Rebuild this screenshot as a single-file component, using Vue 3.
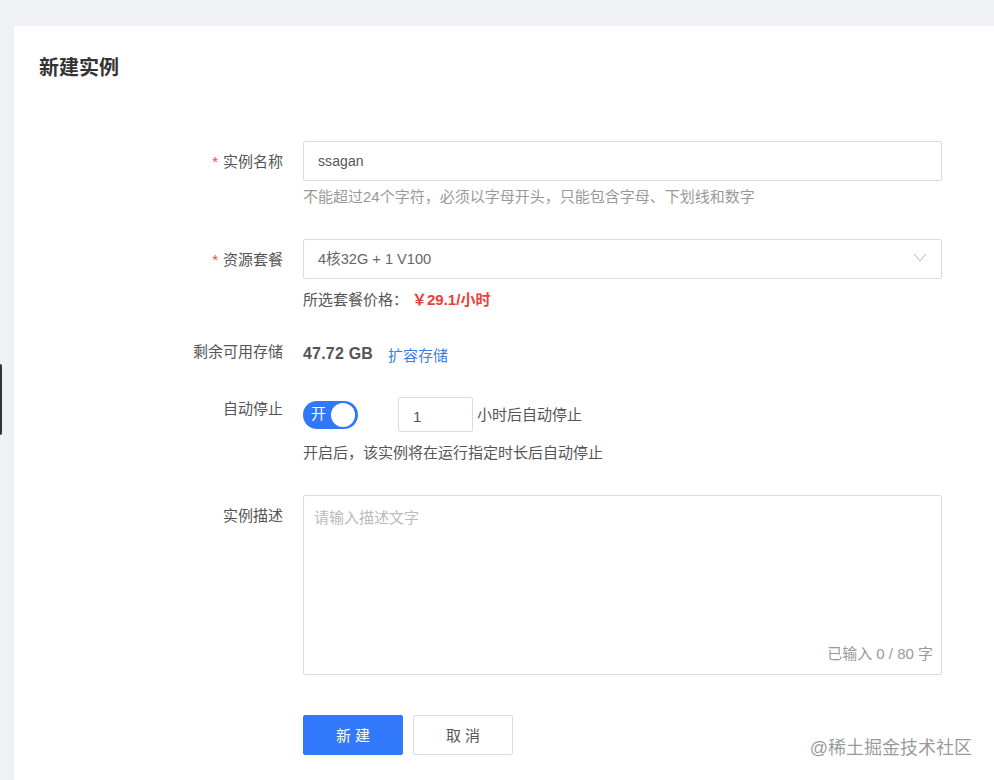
<script setup>
import { ref } from 'vue'

const name = ref('ssagan')
const hours = ref(1)
const desc = ref('')
const maxDesc = 80
</script>

<template>
  <div class="page">
    <div class="side-tab"></div>
    <div class="card">
      <h2 class="title">新建实例</h2>

      <div class="form">
        <div class="row row-name">
          <label class="label"><i>*</i>实例名称</label>
          <div class="control">
            <input v-model="name" class="input" type="text" />
            <p class="hint">不能超过24个字符，必须以字母开头，只能包含字母、下划线和数字</p>
          </div>
        </div>

        <div class="row row-plan">
          <label class="label"><i>*</i>资源套餐</label>
          <div class="control">
            <div class="select">
              <span>4核32G + 1 V100</span>
              <svg class="arrow" width="14" height="9" viewBox="0 0 14 9">
                <path d="M1 1l6 7 6-7" fill="none" stroke="#c4c4c4" stroke-width="1.1" />
              </svg>
            </div>
            <p class="price">所选套餐价格：<b>￥29.1/小时</b></p>
          </div>
        </div>

        <div class="row row-storage">
          <label class="label">剩余可用存储</label>
          <div class="control storage">
            <span class="size">47.72 GB</span>
            <a class="link">扩容存储</a>
          </div>
        </div>

        <div class="row row-stop">
          <label class="label">自动停止</label>
          <div class="control">
            <div class="stop-line">
              <div class="switch">
                <span>开</span>
                <em></em>
              </div>
              <input v-model="hours" class="hours" type="text" />
              <span class="unit">小时后自动停止</span>
            </div>
            <p class="stop-help">开启后，该实例将在运行指定时长后自动停止</p>
          </div>
        </div>

        <div class="row row-desc">
          <label class="label">实例描述</label>
          <div class="control">
            <div class="textarea-wrap">
              <textarea v-model="desc" placeholder="请输入描述文字"></textarea>
              <span class="count">已输入 {{ desc.length }} / {{ maxDesc }} 字</span>
            </div>
          </div>
        </div>

        <div class="row actions">
          <div class="label"></div>
          <div class="control btns">
            <button class="btn primary">新建</button>
            <button class="btn">取消</button>
          </div>
        </div>
      </div>
    </div>
    <div class="watermark">@稀土掘金技术社区</div>
  </div>
</template>

<style>
html,
body {
  margin: 0;
  background: #eff1f5;
}
</style>

<style scoped>
.page {
  position: relative;
  height: 780px;
  padding: 26px 0 0 14px;
  box-sizing: border-box;
  overflow: hidden;
  font-family: "Liberation Sans", "Noto Sans CJK SC", sans-serif;
  font-size: 15px;
  color: #555;
}

.side-tab {
  position: absolute;
  left: 0;
  top: 364px;
  width: 2px;
  height: 71px;
  background: #333;
  border-radius: 0 2px 2px 0;
}

.card {
  height: 754px;
  padding: 31px 52px 0 25px;
  background: #fff;
  box-sizing: border-box;
}

.title {
  margin: 0;
  font-size: 20px;
  line-height: 22px;
  font-weight: 700;
  color: #333;
}

.form {
  margin-top: 62px;
  margin-left: -25px;
}

.row {
  display: flex;
  align-items: flex-start;
}

.label {
  flex: none;
  width: 269px;
  text-align: right;
  margin-right: 20px;
  line-height: 41px;
  color: #555;
}

.label i {
  font-style: normal;
  color: #ee4a44;
  margin-right: 5px;
}

.control {
  flex: none;
  width: 639px;
}

.input,
.select {
  display: flex;
  align-items: center;
  width: 100%;
  height: 40px;
  box-sizing: border-box;
  padding: 0 14px;
  border: 1px solid #dcdcdc;
  border-radius: 2px;
  background: #fff;
  font: inherit;
  color: #555;
  outline: none;
}

.input {
  font-size: 14px;
  letter-spacing: 0.1px;
}

.select {
  justify-content: space-between;
  padding-bottom: 3px;
  font-size: 14.6px;
  color: #666;
}

.hint {
  margin: 6px 0 0;
  line-height: 20px;
  color: #999;
}

.row-plan {
  margin-top: 32px;
}

.price {
  margin: 11px 0 0;
  line-height: 20px;
  color: #555;
}

.price b {
  margin-left: 4px;
  color: #e8403a;
}

.row-storage {
  margin-top: 32px;
}

.row-storage .label {
  line-height: 20px;
}

.storage {
  display: flex;
  align-items: center;
  height: 24px;
}

.size {
  font-size: 16px;
  font-weight: 700;
  letter-spacing: 0.2px;
  color: #555;
}

.link {
  margin-left: 15px;
  color: #3a7fe8;
}

.row-stop {
  margin-top: 31px;
}

.row-stop .label {
  line-height: 24px;
}

.stop-line {
  display: flex;
  align-items: center;
  height: 35px;
}

.switch {
  position: relative;
  flex: none;
  width: 55px;
  height: 28px;
  border-radius: 14px;
  background: #3178f6;
  color: #fff;
  line-height: 26px;
  box-sizing: border-box;
  padding-left: 8px;
}

.switch em {
  position: absolute;
  right: 3px;
  top: 2px;
  width: 24px;
  height: 24px;
  border-radius: 50%;
  background: #fff;
}

.hours {
  flex: none;
  width: 75px;
  height: 35px;
  margin-left: 40px;
  padding: 3px 14px 0;
  box-sizing: border-box;
  border: 1px solid #dcdcdc;
  border-radius: 2px;
  font: inherit;
  color: #555;
  outline: none;
}

.unit {
  margin-left: 4px;
  padding-bottom: 3px;
}

.stop-help {
  margin: 11px 0 0;
  line-height: 20px;
  color: #555;
}

.row-desc {
  margin-top: 32px;
}

.row-desc .label {
  line-height: 42px;
}

.textarea-wrap {
  position: relative;
  height: 180px;
}

textarea {
  display: block;
  width: 100%;
  height: 100%;
  padding: 12px 10px;
  box-sizing: border-box;
  border: 1px solid #dcdcdc;
  border-radius: 2px;
  font: inherit;
  line-height: 20px;
  color: #555;
  outline: none;
  resize: none;
}

textarea::placeholder {
  color: #bbb;
}

.count {
  position: absolute;
  right: 9px;
  bottom: 12px;
  color: #999;
}

.actions {
  margin-top: 40px;
}

.btns {
  display: flex;
  gap: 10px;
}

.btn {
  width: 100px;
  height: 40px;
  padding-bottom: 3px;
  border: 1px solid #dcdcdc;
  border-radius: 2px;
  background: #fff;
  font: inherit;
  letter-spacing: 4px;
  text-indent: 4px;
  color: #555;
}

.btn.primary {
  background: #3178fb;
  border-color: #3178fb;
  color: #fff;
}

.watermark {
  position: absolute;
  right: 22px;
  top: 736px;
  font-size: 18px;
  line-height: 24px;
  color: rgba(120, 120, 120, 0.75);
}
</style>
